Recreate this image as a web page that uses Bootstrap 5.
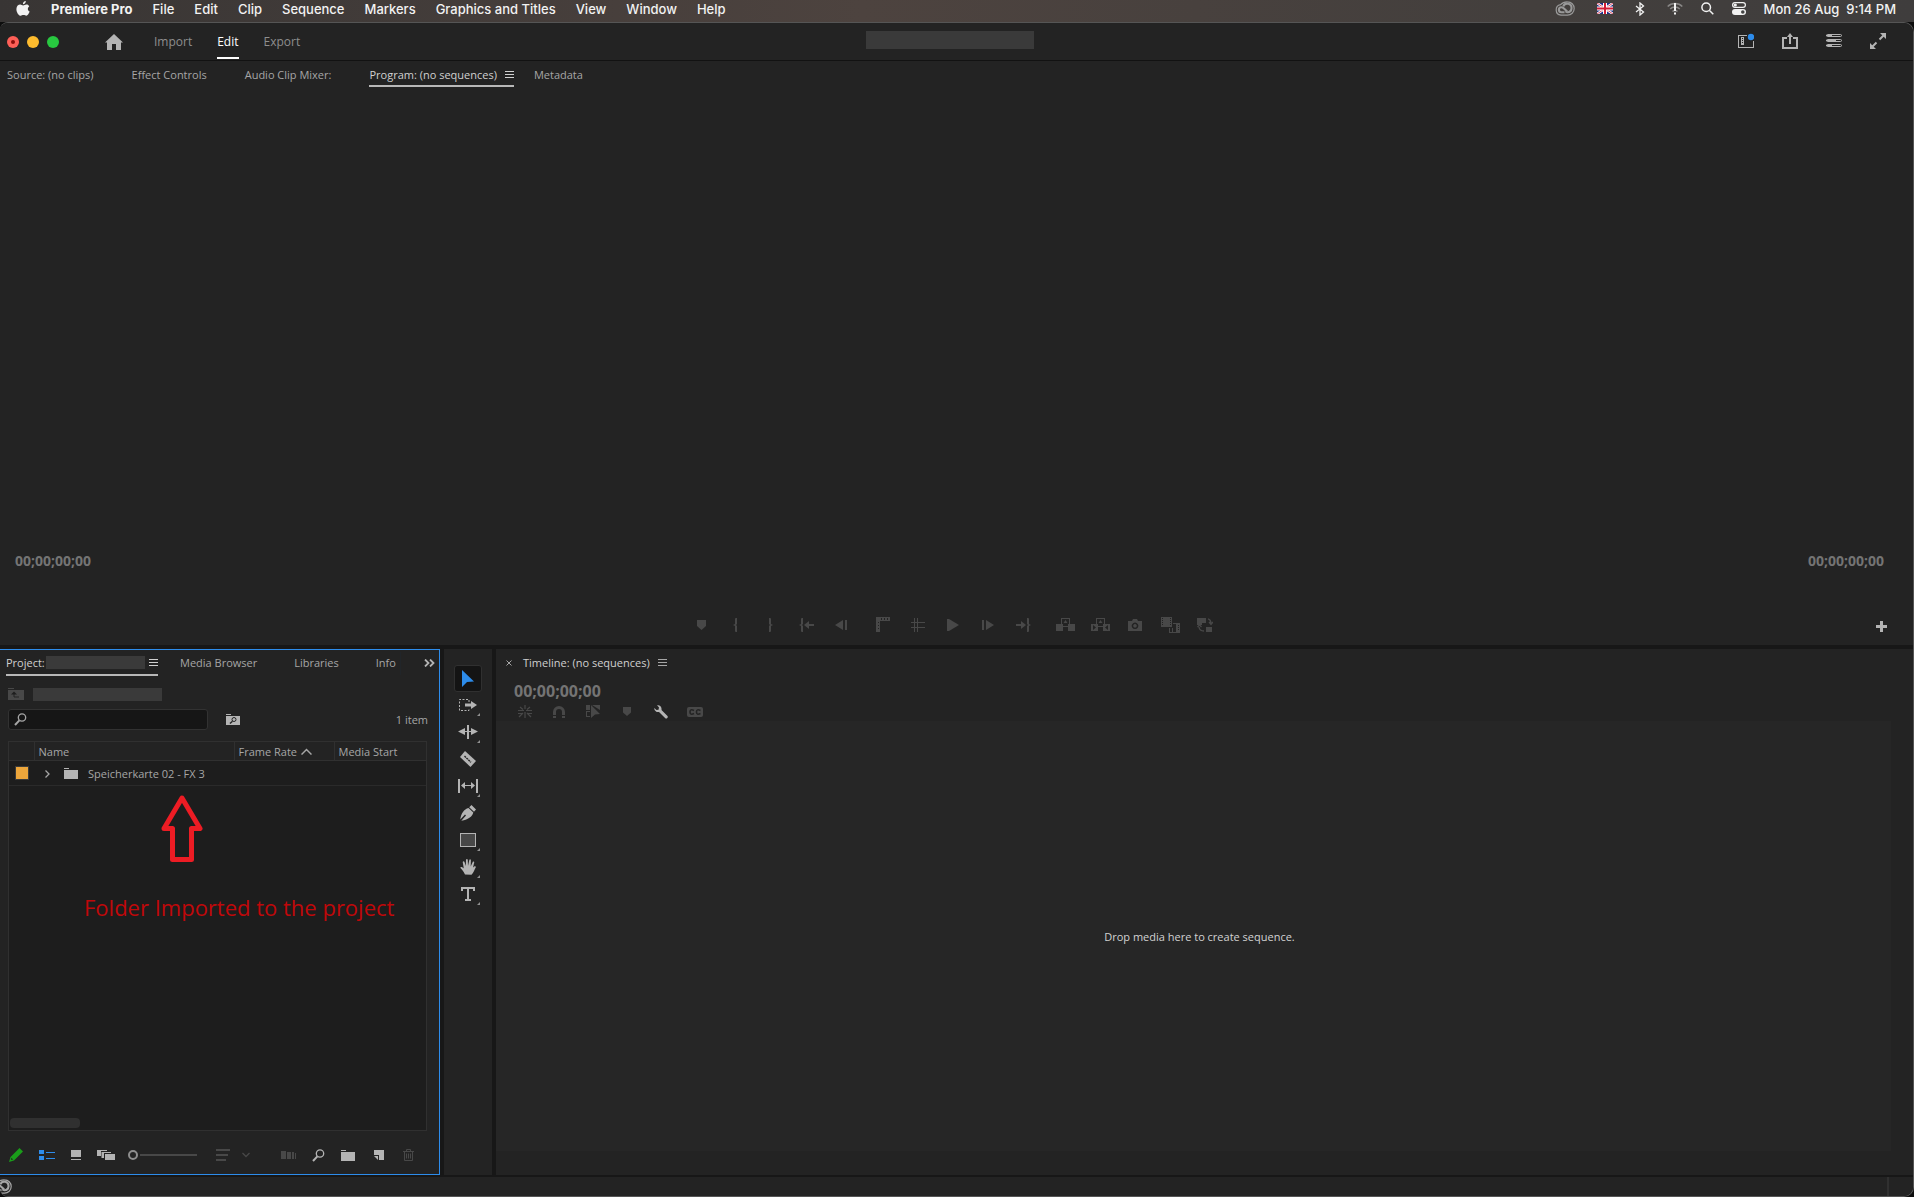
<!DOCTYPE html>
<html lang="en" data-bs-theme="dark">
<head>
<meta charset="utf-8">
<meta name="viewport" content="width=device-width, initial-scale=1">
<title>Premiere Pro</title>
<link href="https://cdn.jsdelivr.net/npm/bootstrap@5.3.0/dist/css/bootstrap.min.css" rel="stylesheet">
<style>
:root{--panel:#232323;--gap:#171717;--ink:#a6a6a6;--icon:#b4b4b4;--dim:#484848;--hi:#2d8ceb}
body{background:#0d0d0d;color:var(--ink);font:11px/16px "Open Sans","Noto Sans",sans-serif;min-height:100vh}
button,a.plain{background:none;border:0;padding:0;color:inherit;text-decoration:none;font:inherit}
svg{display:block;flex:none;fill:currentColor}
.ln{fill:none;stroke:currentColor}
.cut{fill:none;stroke:var(--panel)}
.bright{color:var(--icon)}
.faint{color:var(--dim)}
.osbar{height:22px;padding:0 18px 5px 16px;background:linear-gradient(90deg,#383534,#4d433f 45%,#433f3d 80%,#3f3d3d);color:#f2f2f2;font:500 13px/16px Inter,sans-serif}
.osmenu{gap:20px}
.osmenu svg:first-child{margin-right:1px}
.tray{gap:22px}
.clock{gap:18px;margin-left:-4px}
.clock span{white-space:pre}
.appwin{background:var(--gap);border:1px solid #555;border-left:0;border-radius:8px 10px 10px 8px;overflow:hidden}
.appbar{height:38px;background:var(--panel);border-bottom:1px solid #121212;display:grid;grid-template-columns:1fr 168px 1fr;padding:0 21px 0 7px;align-items:center;font-size:12px;line-height:18px;color:#8e8e8e}
.light{width:12px;height:12px;border-radius:50%;display:flex;align-items:center;justify-content:center}
.light.stop{background:#fe5f57}.light.stop::after{content:"";width:4px;height:4px;border-radius:50%;background:#8d0f0b}
.light.mini{background:#febc2e}.light.zoomed{background:#28c840}
.home{margin-left:46px}
.redact{background:#3a3a3a}
.titlebox{height:18px;margin-bottom:4px}
.modes{gap:25px;height:38px;margin-left:31px}
.modes a{height:36px;line-height:37px}
.modes a.active{color:#fff;border-bottom:2px solid #fff}
.actions{gap:28px;padding:0 6px 2px 0}
.desk{display:grid;grid-template-rows:585fr 527fr;row-gap:4px;background:var(--gap)}
.pane{background:var(--panel)}
.tabs{height:26px;padding-top:3px}
.tabs button{height:22px;line-height:20px;white-space:nowrap}
.tabs .active{color:#d0d0d0;border-bottom:2px solid #b8b8b8}
.mtabs{padding-left:7px;gap:38px}
.mtabs .active{height:23px}
.mtabs button:last-child{margin-left:-18px}
.tcode{font-size:14px;line-height:18px;font-weight:700;color:#747474}
.monitor-time{padding:0 29px 43px 15px}
.transport{color:var(--dim);gap:7px;margin-left:30px}
.transport button{width:35px;height:24px;display:flex;align-items:center;justify-content:center}
.plus{width:37px;padding-top:3px}
.lower{display:grid;grid-template-columns:440px 48px 1fr;column-gap:4px}
.project{border:1px solid var(--hi);border-left:0;padding-top:1px}
.ptabs{padding:1px 0 0 6px;height:26px;gap:37px}
.ptabs button{height:23px;line-height:22px;flex:none}
.ptabs .active{width:152px;height:24px;margin-right:-15px}
.ptabs .active .redact{width:99px;height:13px}
.ptabs .expand{margin-left:-14px}
.crumb{margin-top:11px;gap:9px}
.crumb .redact{width:129px;height:13px}
.search{width:200px;height:21px;background:#161616;border:1px solid #323232;border-radius:3px;padding-left:5px}
.search input{background:none;border:0;outline:0;color:inherit;width:160px;height:17px;padding:0}
.findbin{margin-left:18px}
.count{padding:1px 11px 0 0}
.bin{border:1px solid #303030;background:#1d1d1d;margin:11px 12px 0 8px}
.bin table{width:100%;table-layout:fixed;border-collapse:collapse}
.bin th{font-weight:400;background:#232323;height:19px;padding:1px 0 0 4px;border-right:1px solid #303030;border-bottom:1px solid #303030;line-height:16px}
.bin th:last-child{border-right:0}
.bin td{height:25px;padding:0;border-bottom:1px solid #2a2a2a}
.swatch{width:14px;height:14px;background:#eda63b;border:1px solid #3a3a3a;margin-left:6px}
.item{padding:1px 0 0 11px}
.item .dir{margin:0 10px 0 14px}
.scrollthumb{width:70px;height:10px;border-radius:4px;background:#303030;margin:0 0 2px 1px}
.callout-arrow{position:absolute;left:152px;top:53px;color:#ed1c24}
.callout-text{position:absolute;left:75px;top:150px;color:#c0080a;font-size:22px;line-height:30px;white-space:nowrap}
.footer-tools{height:37px;padding-left:9px;margin-top:6px;gap:16px}
.slide{appearance:none;background:none;width:69px;height:12px;margin:0 3px 0 -3px}
.slide::-webkit-slider-runnable-track{height:2px;background:linear-gradient(90deg,transparent 12px,#484848 12px)}
.slide::-webkit-slider-thumb{appearance:none;width:10px;height:10px;border:2px solid #8e8e8e;border-radius:50%;margin-top:-4px;background:var(--panel)}
.auto{margin-left:15px}
.tools{padding-top:16px;color:var(--icon)}
.tools button{position:relative;width:28px;height:27px;display:flex;align-items:center;justify-content:center}
.tools button.active{color:var(--hi);background:#141414;border:1px solid #303030;border-radius:3px}
.tools .more::after{content:"";position:absolute;right:2px;bottom:3px;border-style:solid;border-width:0 0 3px 3px;border-color:transparent;border-bottom-color:#909090}
.ttabs{padding:2px 0 0 10px;height:27px}
.ttabs span{margin-left:11px;color:#d0d0d0}
.tl-time{padding-left:18px;margin-top:6px;font-size:16px}
.tl-icons{color:var(--dim);gap:20px;padding-left:22px;margin-top:5px}
.tl-icons button{width:14px;height:14px;display:flex;align-items:center;justify-content:center}
.drop{background:#262626;margin:2px 22px 24px 0;color:#d2d2d2;padding:2px 0 0 12px}
.status{height:19px;background:var(--panel);margin-top:2px}
.status svg{margin:2px 0 0 -8px}
.status .corner{width:26px;border-left:2px solid #303030}
</style>
<script src="https://cdn.jsdelivr.net/npm/bootstrap@5.3.0/dist/js/bootstrap.bundle.min.js"></script>
</head>
<body class="d-flex flex-column m-0">
<svg class="d-none" aria-hidden="true">
  <symbol id="burger" viewBox="0 0 9 8"><path d="M0 0h9v1H0zM0 3h9v1H0zM0 6h9v1H0z"/></symbol>
  <symbol id="lens" viewBox="0 0 13 13"><g class="ln"><circle cx="8" cy="4.500" r="3.700" stroke-width="1.300"/><path d="M5.400 7.400L1 12" stroke-width="2"/></g></symbol>
  <symbol id="folder" viewBox="0 0 14 11"><path d="M0 0h5v1H0zM0 2h14v9H0z"/></symbol>
  <symbol id="cc" viewBox="0 0 20 15"><g class="ln"><path stroke-width="1.200" d="M12.500 14.200H6A5.300 5.300 0 0 1 5.600 3.700Q8 .7 12.500.8a6.700 6.700 0 0 1 0 13.400z"/><path stroke-width="2.100" d="M9.500 11.300H6.400a2.500 2.500 0 0 1 0-5q1.300 0 2.300 1l3.500 3.300"/><path stroke-width="2.100" d="M8.300 5.300a4.300 4.300 0 1 1 4.200 6q-1.200-.2-2-1"/></g></symbol>
  <symbol id="shield" viewBox="0 0 9 10"><path d="M0 0h9v6L4.500 10 0 6z"/></symbol>
</svg>

<header class="osbar d-flex align-items-center justify-content-between">
  <nav class="osmenu d-flex align-items-center" aria-label="Menu bar">
    <svg width="14" height="16" viewBox="0 0 14 16"><path d="M9.800 0c.1 1.500-1.200 3.200-2.900 3.200C6.700 1.700 8.200.200 9.800 0zM13.200 5.500c-2 1.200-1.700 4.200.500 5.100-.6 1.700-2 4.200-3.400 4.200-1 0-1.400-.7-2.800-.7s-1.800.7-2.800.7C2.800 14.800.3 11.300.4 8c.1-3 2-4.400 3.800-4.400 1.200 0 2 .8 3 .8.9 0 1.900-.9 3.400-.8 1.100 0 2 .6 2.600 1.900z"/></svg>
    <a class="plain fw-bold" href="#">Premiere Pro</a><a class="plain" href="#">File</a><a class="plain" href="#">Edit</a><a class="plain" href="#">Clip</a><a class="plain" href="#">Sequence</a><a class="plain" href="#">Markers</a><a class="plain" href="#">Graphics and Titles</a><a class="plain" href="#">View</a><a class="plain" href="#">Window</a><a class="plain" href="#">Help</a>
  </nav>
  <div class="tray d-flex align-items-center">
    <svg width="20" height="15" style="color:#999"><use href="#cc"/></svg>
    <svg width="16" height="11" viewBox="0 0 16 11"><path fill="#1c2f86" d="M0 0h16v11H0z"/><path d="M0 0l16 11M16 0L0 11" stroke="#fff" stroke-width="2.400"/><path d="M0 0l16 11M16 0L0 11" stroke="#d11c36" stroke-width=".8"/><path d="M8 0v11M0 5.500h16" stroke="#fff" stroke-width="4"/><path d="M8 0v11M0 5.500h16" stroke="#d11c36" stroke-width="2"/></svg>
    <svg width="10" height="14" viewBox="0 0 10 14"><path class="ln" stroke-width="1.300" d="M1 4l7.500 6L5 13V1l3.500 3L1 10"/></svg>
    <svg width="16" height="13" viewBox="0 0 16 13"><g class="ln" stroke-width="1.500" opacity=".4"><path d="M.7 4.500C4.500.5 11.500.5 15.300 4.500M3.200 7c2.500-2.600 7-2.600 9.600 0M5.500 9.500c1.500-1.500 3.500-1.500 5 0"/></g><path d="M7 1h2v8H7zM7 10.500h2v2H7z"/></svg>
    <div class="clock d-flex align-items-center">
      <svg width="13" height="13" viewBox="0 0 13 13"><g class="ln" stroke-width="1.500"><circle cx="5.200" cy="5.200" r="4.300"/><path d="M8.500 8.500L12.300 12.300"/></g></svg>
      <svg width="14" height="13" viewBox="0 0 14 13"><rect class="ln" x=".6" y=".6" width="12.800" height="4.800" rx="2.400" stroke-width="1.200"/><circle cx="3.300" cy="3" r="1.600"/><rect y="7" width="14" height="6" rx="3"/><circle cx="10.800" cy="10" r="1.800" fill="#444"/></svg>
      <span>Mon 26 Aug  9:14 PM</span>
    </div>
  </div>
</header>

<main class="appwin d-flex flex-column flex-grow-1">
  <div class="appbar">
    <div class="d-flex align-items-center">
      <div class="d-flex gap-2"><button class="light stop" aria-label="Close"></button><button class="light mini" aria-label="Minimise"></button><button class="light zoomed" aria-label="Zoom"></button></div>
      <button class="home bright" aria-label="Home"><svg width="18" height="16" viewBox="0 0 18 16"><path d="M9 0l9 8.500h-2V16h-5v-6H7v6H2V8.500H0z"/></svg></button>
      <nav class="modes d-flex" aria-label="Modes"><a class="plain" href="#">Import</a><a class="plain active" href="#">Edit</a><a class="plain" href="#">Export</a></nav>
    </div>
    <div class="redact titlebox"></div>
    <div class="actions bright d-flex justify-content-end">
      <button aria-label="Workspaces"><svg width="16" height="16" viewBox="0 0 16 16"><path d="M0 2h9v1H1v11h14V8h1v7H0zM3 4h3v8H3zM4 5v1h1V5zm0 2v1h1V7zm0 2v1h1V9z" fill-rule="evenodd"/><circle cx="13" cy="4" r="3.200" fill="#2d8ceb"/></svg></button>
      <button aria-label="Quick export"><svg width="16" height="16" viewBox="0 0 16 16"><path class="ln" stroke-width="2" d="M5 5H1v10h14V5h-4"/><path d="M7 11V4H5l3-4 3 4H9v7z"/></svg></button>
      <button aria-label="Progress"><svg width="16" height="14" viewBox="0 0 16 14"><g class="ln"><rect x=".5" y=".5" width="15" height="2" rx="1"/><rect x=".5" y="5.500" width="15" height="2" rx="1"/><rect x=".5" y="10.500" width="15" height="2" rx="1"/></g><path d="M0 1h6v1H0zM0 6h10v1H0zM0 11h6v1H0z"/></svg></button>
      <button aria-label="Full screen"><svg width="16" height="16" viewBox="0 0 16 16"><path d="M10 0h6v6zM0 10v6h6z"/><path class="ln" stroke-width="2" d="M13.500 2.500L9.500 6.500M2.500 13.500l4-4"/></svg></button>
    </div>
  </div>

  <div class="desk flex-grow-1">
    <section class="pane d-flex flex-column" aria-label="Program monitor">
      <div class="tabs mtabs d-flex">
        <button>Source: (no clips)</button><button>Effect Controls</button><button>Audio Clip Mixer:</button>
        <button class="active d-flex align-items-center">Program: (no sequences)<svg class="ms-2" width="9" height="8"><use href="#burger"/></svg></button>
        <button>Metadata</button>
      </div>
      <div class="monitor-time d-flex justify-content-between tcode mt-auto"><span>00;00;00;00</span><span>00;00;00;00</span></div>
      <div class="d-flex align-items-center pb-2">
        <div class="transport d-flex justify-content-center flex-grow-1">
          <div class="d-flex">
            <button aria-label="Add marker"><svg width="9" height="10"><use href="#shield"/></svg></button>
            <button aria-label="Mark in"><svg width="6" height="14" viewBox="0 0 6 14"><path d="M3 0h1v6L3 7l1 1v6H3q-1 0-1-1V8L0 7l2-1V1q0-1 1-1z"/></svg></button>
            <button aria-label="Mark out"><svg width="6" height="14" viewBox="0 0 6 14"><path d="M2 0H1v6l1 1-1 1v6h1q1 0 1-1V8l2-1-2-1V1q0-1-1-1z"/></svg></button>
            <button aria-label="Go to in"><svg width="15" height="14" viewBox="0 0 15 14"><path d="M3 0h1v6L3 7l1 1v6H3q-1 0-1-1V8L0 7l2-1V1q0-1 1-1zM5 7l5-4v3h5v2h-5v3z"/></svg></button>
            <button aria-label="Step back"><svg width="12" height="10" viewBox="0 0 12 10"><path d="M8 0v10L0 5zM10 0h2v10h-2z"/></svg></button>
          </div>
          <div class="d-flex">
            <button aria-label="Show rulers"><svg width="14" height="15" viewBox="0 0 14 15"><path fill-rule="evenodd" d="M0 0h14v4H4v11H0zM5 1v2h1V1zm3 0v2h1V1zm3 0v2h1V1zM2 5v1h1V5zm0 3v1h1V8zm0 3v1h1v-1z"/></svg></button>
            <button aria-label="Show guides"><svg width="14" height="14" viewBox="0 0 14 14"><path d="M0 4h14v1H0zM0 9h14v1H0zM3 0h1v14H3zM6 0h1v14H6z"/></svg></button>
            <button aria-label="Play"><svg width="12" height="12" viewBox="0 0 12 12"><path d="M0 0h2l10 6-10 6H0z"/></svg></button>
            <button aria-label="Step forward"><svg width="12" height="10" viewBox="0 0 12 10"><path d="M4 0v10l8-5zM0 0h2v10H0z"/></svg></button>
            <button aria-label="Go to out"><svg width="15" height="14" viewBox="0 0 15 14"><path d="M12 0h-1v6l1 1-1 1v6h1q1 0 1-1V8l2-1-2-1V1q0-1-1-1zM10 7L5 3v3H0v2h5v3z"/></svg></button>
          </div>
          <div class="d-flex">
            <button aria-label="Lift"><svg width="19" height="13" viewBox="0 0 19 13"><path d="M0 6h7v7H0zM12 6h7v7h-7zM5 0h9v6h-1V1H6v5H5zM7 8h5v1H7zM9.500 2l2 3h-4z"/></svg></button>
            <button aria-label="Extract"><svg width="19" height="13" viewBox="0 0 19 13"><path fill-rule="evenodd" d="M0 6h7v7H0zM2 7v5l3-2.500zM12 6h7v7h-7zM17 7v5l-3-2.500zM5 0h9v6h-1V1H6v5H5zM7 8h5v1H7zM9.500 2l2 3h-4z"/></svg></button>
            <button aria-label="Export frame"><svg width="14" height="12" viewBox="0 0 14 12"><path fill-rule="evenodd" d="M0 2h4l1-2h4l1 2h4v10H0zM7 3.500a3.300 3.300 0 1 0 .01 0zM7 5a1.800 1.800 0 1 1-.01 0z"/></svg></button>
            <button aria-label="Comparison view"><svg width="19" height="16" viewBox="0 0 19 16"><path fill-rule="evenodd" d="M0 0h11v10H0zM1 1v1h1V1zm0 2v1h1V3zm0 2v1h1V5zm0 2v1h1V7zM9 1v1h1V1zm0 2v1h1V3zm0 2v1h1V5zm0 2v1h1V7zM12 6h7v10H8v-5h1v4h2v-4h1v4h3V7h-3zM17 8v1h1V8zm0 2v1h1v-1zm0 2v1h1v-1z"/></svg></button>
            <button aria-label="Toggle proxies"><svg width="16" height="14" viewBox="0 0 16 14"><path d="M0 0h9v5H5v2H0zM9 9h6v5H9z"/><path class="ln" d="M11 .8q3 .7 3 5M12 4l2 2.500L16 4M2 9q.5 4 5 4M.5 9L2.500 7l2 2" stroke-width="1.300"/></svg></button>
          </div>
        </div>
        <button class="plus bright" aria-label="Button editor"><svg width="11" height="11" viewBox="0 0 11 11"><path d="M4 0h3v4h4v3H7v4H4V7H0V4h4z"/></svg></button>
      </div>
    </section>

    <div class="lower">
      <section class="project pane d-flex flex-column" aria-label="Project">
        <div class="tabs ptabs d-flex">
          <button class="active d-flex align-items-center">Project:<span class="redact ms-auto"></span><svg class="ms-1" width="9" height="8"><use href="#burger"/></svg></button>
          <button>Media Browser</button><button>Libraries</button><button class="border-end border-dark pe-1">Info</button>
          <button class="expand bright" aria-label="More panels"><svg width="11" height="8" viewBox="0 0 11 8"><path class="ln" stroke-width="1.800" d="M1 .5L4.500 4 1 7.500M6 .5L9.500 4 6 7.500"/></svg></button>
        </div>
        <div class="crumb d-flex align-items-center ps-2">
          <svg class="faint" width="16" height="12" viewBox="0 0 16 12"><path d="M0 0h6v1H0zM0 2h16v10H0z"/><path d="M6 5v4h5" class="cut"/><path d="M3 6.500l3-3 3 3z" fill="#1d1d1d"/></svg>
          <div class="redact"></div>
        </div>
        <div class="d-flex align-items-center ps-2 mt-2">
          <label class="search d-flex align-items-center gap-2"><svg width="13" height="13"><use href="#lens"/></svg><input type="text" aria-label="Search project"></label>
          <button class="findbin bright" aria-label="Search bin"><svg width="14" height="11" viewBox="0 0 14 11"><path d="M0 0h5v1H0zM0 2h14v9H0z"/><circle class="cut" cx="8" cy="5.500" r="2"/><path class="cut" d="M6.500 7.200L4 9.500" stroke-width="1.400"/></svg></button>
          <span class="count ms-auto">1 item</span>
        </div>
        <div class="bin flex-grow-1 d-flex flex-column position-relative">
          <table>
            <colgroup><col style="width:25px"><col style="width:200px"><col style="width:100px"><col></colgroup>
            <thead><tr><th aria-label="Label"></th><th>Name</th><th><span class="d-flex align-items-center gap-1">Frame Rate<svg width="11" height="7" viewBox="0 0 11 7"><path class="ln" stroke-width="1.500" d="M.5 6.500l5-5 5 5"/></svg></span></th><th>Media Start</th></tr></thead>
            <tbody><tr><td><div class="swatch"></div></td><td colspan="3"><div class="item d-flex align-items-center"><svg width="5" height="8" viewBox="0 0 5 8"><path class="ln" stroke-width="1.300" d="M.5.5L4 4 .5 7.500"/></svg><svg class="dir bright" width="14" height="11"><use href="#folder"/></svg>Speicherkarte 02 - FX 3</div></td></tr></tbody>
          </table>
          <svg class="callout-arrow" width="42" height="67" viewBox="0 0 42 67"><path class="ln" stroke-width="5" stroke-linejoin="round" d="M21 3L39 33.500H30.500V64.500H11.500V33.500H3z"/></svg>
          <div class="callout-text">Folder Imported to the project</div>
          <div class="scrollthumb mt-auto"></div>
        </div>
        <div class="footer-tools bright d-flex align-items-center">
          <button aria-label="Writable" style="color:#1a9c1a"><svg width="14" height="14" viewBox="0 0 14 14"><path d="M10.500 0L14 3.500 5 12.500 0 14l1.500-5zM1.800 11l1.200 1.200.8-.9L2.700 10z" fill-rule="evenodd"/></svg></button>
          <button aria-label="List view" style="color:#2d8ceb"><svg width="16" height="11" viewBox="0 0 16 11"><path d="M0 0h5v4H0zM0 6h5v4H0zM7 2h9v1H7zM7 8h9v1H7z"/></svg></button>
          <button aria-label="Icon view"><svg width="10" height="10" viewBox="0 0 10 10"><path d="M0 0h10v7H0zM0 9h10v1H0z"/></svg></button>
          <button aria-label="Freeform view"><svg width="18" height="10" viewBox="0 0 18 10"><path d="M0 0h10v1H4v5H0zM4.500 2H14v1H7v5H4.500zM8 4h10v6H8z"/></svg></button>
          <input class="slide" type="range" min="0" max="100" value="0" aria-label="Thumbnail size">
          <button class="faint" aria-label="Sort"><svg width="34" height="12" viewBox="0 0 34 12"><path d="M0 0h14v2H0zM0 5h12v2H0zM0 10h10v2H0z"/><path class="ln" stroke-width="1.300" d="M26.500 4L30 7.500 33.500 4"/></svg></button>
          <button class="faint auto" aria-label="Automate to sequence"><svg width="15" height="8" viewBox="0 0 15 8"><path d="M0 0h5v8H0zM6 1h4v7H6zM11 1h2v7h-2zM14 2h1v6h-1z"/></svg></button>
          <button aria-label="Find"><svg width="13" height="13"><use href="#lens"/></svg></button>
          <button aria-label="New bin"><svg width="14" height="11"><use href="#folder"/></svg></button>
          <button style="padding-left:3px" aria-label="New item"><svg width="10" height="10" viewBox="0 0 10 10"><path d="M0 0h10v10H5V5H0zM0 6h4v4z"/></svg></button>
          <button class="faint" style="padding-left:3px" aria-label="Delete"><svg width="11" height="12" viewBox="0 0 11 12"><path class="ln" d="M0 2.500h11M3.500 2V.5h4V2M1.500 3v8.500h8V3M3.500 4.500v5M5.500 4.500v5M7.500 4.500v5"/></svg></button>
        </div>
      </section>

      <section class="tools pane d-flex flex-column align-items-center" aria-label="Tools">
        <button class="active" aria-label="Selection"><svg width="12" height="17" viewBox="0 0 12 17"><path d="M0 0l12 11.500-7 .5-5 5z"/></svg></button>
        <button class="more" aria-label="Track select"><svg width="18" height="12" viewBox="0 0 18 12"><path class="ln" stroke-dasharray="2 1.500" d="M10 3V.5H.5v11H10V9"/><path d="M6 4.500h6V2l6 4-6 4V7.500H6z"/></svg></button>
        <button class="more" aria-label="Ripple edit"><svg width="20" height="14" viewBox="0 0 20 14"><path d="M9 0h2v14H9zM0 6.500L7 3v3h6V3l7 3.500-7 3.500V7H7v3z"/></svg></button>
        <button aria-label="Razor"><svg width="16" height="16" viewBox="0 0 16 16"><path d="M5 0l11 10-5.500 6L0 6z"/><path class="cut" stroke-width="1.400" stroke-dasharray="2 .7" d="M4.500 5l6.500 6.300"/></svg></button>
        <button class="more" aria-label="Slip"><svg width="20" height="14" viewBox="0 0 20 14"><path d="M0 0h2v14H0zM18 0h2v14h-2zM3 6.500L7 3v3h6V3l4 3.500L13 10V7H7v3z"/></svg></button>
        <button aria-label="Pen"><svg width="16" height="16" viewBox="0 0 16 16"><path d="M11.500 0L16 4.500l-2 2.300L9.200 2.200zM8.500 3l4.800 4.500c-1 4-4.300 6.700-12 8.300L6 10.500 5 9.500.3 14.500C1 8.500 4 4 8.500 3z"/></svg></button>
        <button class="more" aria-label="Rectangle"><svg width="16" height="14" viewBox="0 0 16 14"><rect x=".5" y=".5" width="15" height="13" fill="#484848" stroke="currentColor"/></svg></button>
        <button class="more" aria-label="Hand"><svg width="16" height="16" viewBox="0 0 16 16"><path d="M5 15.500C3.500 12.500 1.800 10 .2 8.800c.7-1.300 2-1 3.600.7L2.700 3c.3-1.200 1.500-1 1.800.1l1.300 4L6 .8C6.300-.2 7.500-.2 7.800.8L8 7 9.300.9c.4-1 1.600-.7 1.600.4L10.700 7.500l2.100-4.700c.6-.8 1.600-.4 1.400.7L13 8.500l1.500-1.200c.8-.4 1.700.2 1.300 1-1.600 2.500-2 5.500-4.300 7.500z"/></svg></button>
        <button class="more" aria-label="Type"><svg width="14" height="14" viewBox="0 0 14 14"><path class="ln" stroke-width="2" d="M1 4V1h12v3M7 1v12M4 13h6"/></svg></button>
      </section>

      <section class="pane d-flex flex-column" aria-label="Timeline">
        <div class="tabs ttabs d-flex align-items-center">
          <button aria-label="Close timeline"><svg width="6" height="6" viewBox="0 0 6 6"><path class="ln" d="M.5.5l5 5M5.500.5l-5 5"/></svg></button>
          <span>Timeline: (no sequences)</span>
          <button class="ms-2" aria-label="Panel menu"><svg width="9" height="8"><use href="#burger"/></svg></button>
        </div>
        <div class="tcode tl-time">00;00;00;00</div>
        <div class="tl-icons d-flex">
          <button aria-label="Insert as nests"><svg width="14" height="13" viewBox="0 0 14 13"><path class="ln" d="M0 5.500h6M8 5.500h6M7 0v4M7 7v6M2 2l3 2.500M12 2L9 4.500M5 8l-4 4M9 8l4 4M0 8.500h5M9 8.500h5" stroke-width="1.200"/></svg></button>
          <button aria-label="Snap"><svg width="12" height="12" viewBox="0 0 12 12"><path d="M0 9V6a6 6 0 0 1 12 0v3H9V6a3 3 0 0 0-6 0v3zM0 10h3v2H0zM9 10h3v2H9z"/></svg></button>
          <button aria-label="Linked selection"><svg width="14" height="13" viewBox="0 0 14 13"><path d="M0 0h4v5H0zM6 0h8v5zM0 6h4v1H1v4h3v1H0zM5 0l9 9-5 .5L5 13z"/></svg></button>
          <button aria-label="Marker"><svg width="8" height="9" viewBox="0 0 9 10"><path d="M0 0h9v6L4.500 10 0 6z"/></svg></button>
          <button class="bright" aria-label="Settings"><svg width="14" height="14" viewBox="0 0 14 14"><path d="M3 .3C5.500-.4 8 1.500 7.500 5l6 6c1 1.500-.8 3.200-2.200 2.200L5 7C2.500 7.500 0 5.500.3 3L2.500 5l2-.3L5 2.500z"/></svg></button>
          <button aria-label="Captions"><svg width="16" height="10" viewBox="0 0 16 10"><rect width="16" height="10" rx="2"/><path class="cut" stroke-width="1.600" d="M7 3.500Q3 1.500 3 5t4 1.500M13.500 3.500Q9.500 1.500 9.500 5t4 1.500"/></svg></button>
        </div>
        <div class="drop flex-grow-1 d-flex align-items-center justify-content-center">Drop media here to create sequence.</div>
      </section>
    </div>
  </div>
  <footer class="status d-flex justify-content-between"><svg width="20" height="15"><use href="#cc"/></svg><div class="corner"></div></footer>
</main>
</body>
</html>
